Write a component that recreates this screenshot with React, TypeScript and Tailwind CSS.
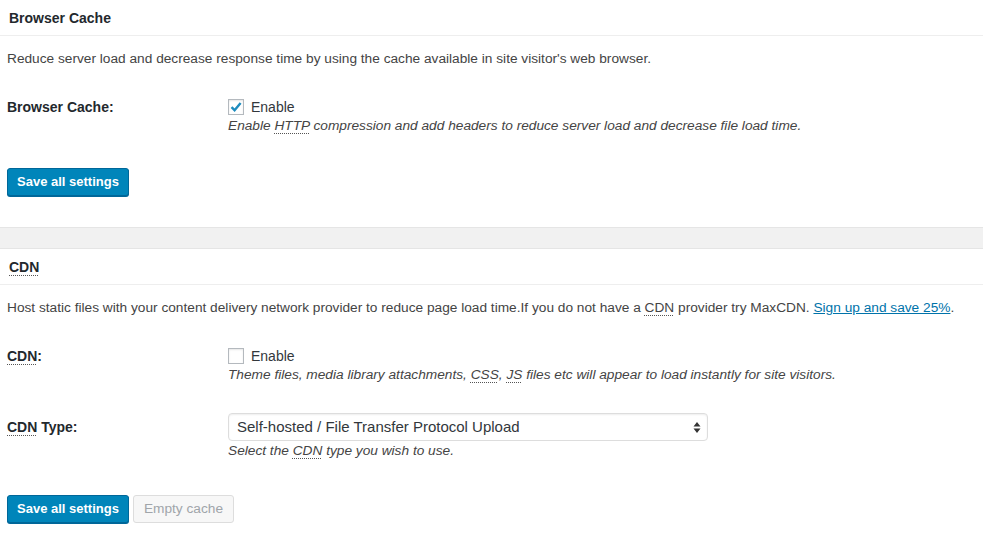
const font = "font-['Liberation_Sans',Arial,sans-serif]";

function Abbr({ children }: { children: React.ReactNode }) {
  return (
    <span className="underline decoration-dotted decoration-[#555] decoration-1 underline-offset-[3px]">
      {children}
    </span>
  );
}

function Checkbox({ checked }: { checked?: boolean }) {
  return (
    <span className="flex h-4 w-4 shrink-0 items-center justify-center border border-[#b4b9be] bg-white shadow-[inset_0_1px_2px_rgba(0,0,0,0.1)]">
      {checked && (
        <svg width="14" height="14" viewBox="0 0 14 14">
          <path d="M2.5 7.2 L5.6 10.2 L11.6 3" fill="none" stroke="#1e8cbe" strokeWidth="2.4" />
        </svg>
      )}
    </span>
  );
}

function PrimaryButton({ label }: { label: string }) {
  return (
    <button className="h-7 rounded-[3px] border border-[#006799] bg-[#0085ba] px-[9px] text-[13px] font-bold text-white shadow-[0_1px_0_#006799]">
      {label}
    </button>
  );
}

function SectionHeader({ children }: { children: React.ReactNode }) {
  return (
    <div className="flex h-[36px] items-center border-b border-[#eeeeee] pl-[9px] pt-[2px] text-[14px] font-bold text-[#23282d]">
      {children}
    </div>
  );
}

export default function App() {
  return (
    <div className={`${font} min-h-[553px] w-[983px] overflow-hidden bg-white text-[#444]`}>
      {/* Browser Cache */}
      <section className="pb-[31px]">
        <SectionHeader>Browser Cache</SectionHeader>
        <p className="mt-[13px] pl-[7px] text-[13.7px] leading-[19px]">
          Reduce server load and decrease response time by using the cache available in site visitor's web browser.
        </p>
        <div className="mt-[29px] flex pl-[7px]">
          <div className="w-[221px] pt-[1px] text-[14px] font-bold leading-[19px] text-[#23282d]">Browser Cache:</div>
          <div>
            <label className="flex h-[19px] items-center gap-[7px] text-[14px] text-[#32373c]">
              <Checkbox checked />
              <span className="pt-[2px]">Enable</span>
            </label>
            <p className="text-[13.7px] italic leading-[19px] text-[#444]">
              Enable <Abbr>HTTP</Abbr> compression and add headers to reduce server load and decrease file load time.
            </p>
          </div>
        </div>
        <div className="mt-[33px] pl-[7px]">
          <PrimaryButton label="Save all settings" />
        </div>
      </section>

      {/* separator */}
      <div className="h-[22px] border-y border-[#e5e5e5] bg-[#f1f1f1]" />

      {/* CDN */}
      <section>
        <SectionHeader>
          <Abbr>CDN</Abbr>
        </SectionHeader>
        <p className="mt-[13px] pl-[7px] text-[13.7px] leading-[19px]">
          Host static files with your content delivery network provider to reduce page load time.If you do not have a{" "}
          <Abbr>CDN</Abbr> provider try MaxCDN.{" "}
          <a className="text-[#0073aa] underline">Sign up and save 25%</a>.
        </p>
        <div className="mt-[29px] flex pl-[7px]">
          <div className="w-[221px] pt-[1px] text-[14px] font-bold leading-[19px] text-[#23282d]">
            <Abbr>CDN</Abbr>:
          </div>
          <div>
            <label className="flex h-[19px] items-center gap-[7px] text-[14px] text-[#32373c]">
              <Checkbox />
              <span className="pt-[2px]">Enable</span>
            </label>
            <p className="text-[13.7px] italic leading-[19px] text-[#444]">
              Theme files, media library attachments, <Abbr>CSS</Abbr>, <Abbr>JS</Abbr> files etc will appear to load instantly for site visitors.
            </p>
          </div>
        </div>
        <div className="mt-[29px] flex pl-[7px]">
          <div className="flex h-7 w-[221px] items-center pt-[1px] text-[14px] font-bold text-[#23282d]">
            <span>
              <Abbr>CDN</Abbr> Type:
            </span>
          </div>
          <div>
            <div className="flex h-7 w-[480px] items-center justify-between rounded-[4px] border border-[#dddddd] bg-white pl-[8px] pr-[6px] text-[15px] text-[#32373c] shadow-[inset_0_1px_2px_rgba(0,0,0,0.07)]">
              <span>Self-hosted / File Transfer Protocol Upload</span>
              <svg width="8" height="13" viewBox="0 0 8 13">
                <path d="M4 1 L7.5 5.5 H0.5 Z M4 12 L7.5 7.5 H0.5 Z" fill="#333" />
              </svg>
            </div>
            <p className="text-[13.7px] italic leading-[19px] text-[#444]">
              Select the <Abbr>CDN</Abbr> type you wish to use.
            </p>
          </div>
        </div>
        <div className="mt-[35px] flex gap-[4px] pl-[7px]">
          <PrimaryButton label="Save all settings" />
          <button disabled className="h-7 rounded-[3px] border border-[#dddddd] bg-[#f7f7f7] px-[10px] text-[13.7px] text-[#a0a5aa]">
            Empty cache
          </button>
        </div>
      </section>
    </div>
  );
}
